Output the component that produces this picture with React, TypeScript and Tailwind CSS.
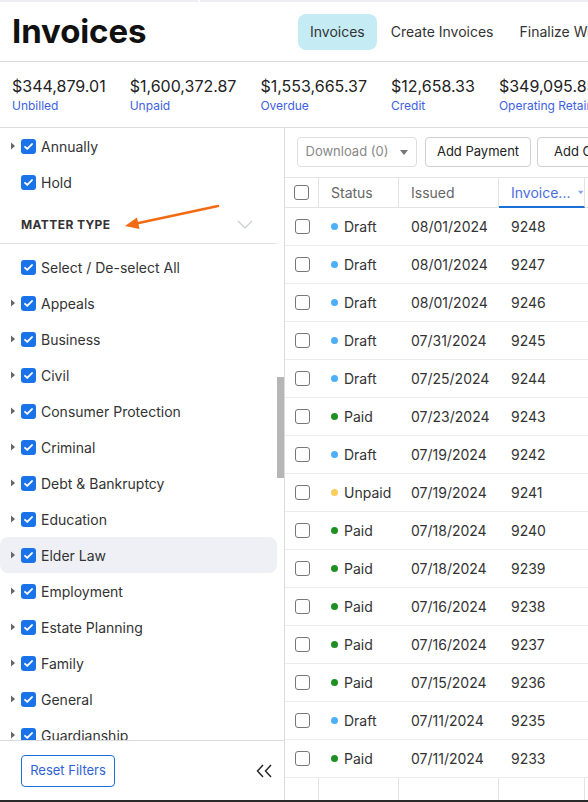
import React from "react";

type Row = { status: "Draft" | "Paid" | "Unpaid"; issued: string; num: string };

const rows: Row[] = [
  { status: "Draft", issued: "08/01/2024", num: "9248" },
  { status: "Draft", issued: "08/01/2024", num: "9247" },
  { status: "Draft", issued: "08/01/2024", num: "9246" },
  { status: "Draft", issued: "07/31/2024", num: "9245" },
  { status: "Draft", issued: "07/25/2024", num: "9244" },
  { status: "Paid", issued: "07/23/2024", num: "9243" },
  { status: "Draft", issued: "07/19/2024", num: "9242" },
  { status: "Unpaid", issued: "07/19/2024", num: "9241" },
  { status: "Paid", issued: "07/18/2024", num: "9240" },
  { status: "Paid", issued: "07/18/2024", num: "9239" },
  { status: "Paid", issued: "07/16/2024", num: "9238" },
  { status: "Paid", issued: "07/16/2024", num: "9237" },
  { status: "Paid", issued: "07/15/2024", num: "9236" },
  { status: "Draft", issued: "07/11/2024", num: "9235" },
  { status: "Paid", issued: "07/11/2024", num: "9233" },
];

const stats = [
  { amount: "$344,879.01", label: "Unbilled" },
  { amount: "$1,600,372.87", label: "Unpaid" },
  { amount: "$1,553,665.37", label: "Overdue" },
  { amount: "$12,658.33", label: "Credit" },
  { amount: "$349,095.85", label: "Operating Retainer" },
];

const matterTypes = [
  "Appeals",
  "Business",
  "Civil",
  "Consumer Protection",
  "Criminal",
  "Debt & Bankruptcy",
  "Education",
  "Elder Law",
  "Employment",
  "Estate Planning",
  "Family",
  "General",
  "Guardianship",
];

function Check() {
  return (
    <span className="flex h-[15px] w-[15px] shrink-0 items-center justify-center rounded-[3px] bg-[#1a73e8]">
      <svg width="11" height="11" viewBox="0 0 12 12" fill="none">
        <path d="M2.2 6.3l2.4 2.4 5.2-5.4" stroke="white" strokeWidth="2" strokeLinecap="round" strokeLinejoin="round" />
      </svg>
    </span>
  );
}

function Caret() {
  return (
    <svg width="6" height="8" viewBox="0 0 6 8" className="shrink-0">
      <path d="M1 0.5L5 4L1 7.5Z" fill="#666" />
    </svg>
  );
}

function FilterRow({ label, caret = true, active = false }: { label: string; caret?: boolean; active?: boolean }) {
  return (
    <div className={`flex h-9 items-center gap-[5px] rounded-lg pl-[9px] ${active ? "bg-[#eef0f5]" : ""}`}>
      <span className="flex w-[7px] justify-center">{caret && <Caret />}</span>
      <Check />
      <span className="text-[14px] text-[#333]">{label}</span>
    </div>
  );
}

const dot: Record<Row["status"], string> = {
  Draft: "bg-[#4db0f5]",
  Paid: "bg-[#1f8f24]",
  Unpaid: "bg-[#fbcd5e]",
};

function Box() {
  return <span className="block h-[15px] w-[15px] rounded-[3px] border border-[#777] bg-white" />;
}

export default function App() {
  return (
    <div className="h-[802px] w-[588px] overflow-hidden bg-white font-['Inter','Liberation_Sans',sans-serif] text-[#222]">
      <div className="flex h-[2px]">
        <div className="w-[198px] bg-[#eceef3]" />
        <div className="ml-[2px] flex-1 bg-[#eceef3]" />
      </div>

      <header className="flex h-[60px] items-center overflow-hidden border-b border-[#dcdcdc] pl-3">
        <h1 className="w-[286px] shrink-0 text-[33px] font-bold leading-none tracking-[-0.1px] text-[#111]">Invoices</h1>
        <nav className="flex shrink-0 items-center gap-[2px] whitespace-nowrap text-[14px] text-[#333]">
          <span className="flex h-9 items-center rounded-lg bg-[#c5ecf4] px-3">Invoices</span>
          <span className="flex h-9 items-center px-3">Create Invoices</span>
          <span className="flex h-9 items-center px-3">Finalize Write-offs</span>
        </nav>
      </header>

      <section className="flex h-[66px] items-center gap-6 overflow-hidden whitespace-nowrap border-b border-[#dcdcdc] px-3">
        {stats.map((s) => (
          <div key={s.label} className="flex shrink-0 flex-col pt-[2px]">
            <span className="text-[16px] leading-5 text-[#222]">{s.amount}</span>
            <span className="text-[12px] leading-5 text-[#3d5fe0]">{s.label}</span>
          </div>
        ))}
      </section>

      <div className="flex h-[672px]">
        <aside className="flex w-[285px] shrink-0 flex-col border-r border-[#dcdcdc]">
          <div className="relative flex-1 overflow-hidden">
            <div className="w-[277px]">
              <FilterRow label="Annually" />
              <FilterRow label="Hold" caret={false} />
              <div className="relative flex h-[44px] items-center justify-between border-b border-[#e3e3e3] pl-[21px] pr-6 pt-[6px]">
                <span className="text-[12px] font-bold tracking-[0.4px] text-[#333]">MATTER TYPE</span>
                <svg width="16" height="9" viewBox="0 0 16 9" fill="none">
                  <path d="M1 1l7 7 7-7" stroke="#c8ccd6" strokeWidth="1.2" />
                </svg>
                <svg className="absolute left-[120px] top-[2px]" width="104" height="28" viewBox="0 0 104 28" fill="none">
                  <path d="M98 4L14 22" stroke="#f26a14" strokeWidth="2.5" strokeLinecap="round" />
                  <path d="M5 24L17 15.5L19.5 27Z" fill="#f26a14" />
                </svg>
              </div>
              <div className="h-[5px]" />
              <FilterRow label="Select / De-select All" caret={false} />
              {matterTypes.map((m) => (
                <FilterRow key={m} label={m} active={m === "Elder Law"} />
              ))}
            </div>
            <div className="absolute left-[277px] top-[249px] h-[101px] w-[7px] bg-[#b6b6b6]" />
          </div>
          <div className="flex h-[60px] items-center justify-between border-t border-[#dcdcdc] pl-[21px] pr-[12px]">
            <button className="h-8 w-[94px] rounded-[4px] border border-[#1a6fd6] text-[13px] text-[#2f62d6]">Reset Filters</button>
            <svg width="16" height="14" viewBox="0 0 16 14" fill="none">
              <path d="M7 1L1.5 7L7 13M15 1L9.5 7L15 13" stroke="#222" strokeWidth="1.4" />
            </svg>
          </div>
        </aside>

        <main className="flex min-w-0 flex-1 flex-col overflow-hidden">
          <div className="flex h-[49px] shrink-0 items-start whitespace-nowrap pl-3 pt-[9px] text-[13px]">
            <button className="flex h-[30px] w-[120px] shrink-0 items-center justify-center gap-3 rounded-[4px] border border-[#dedede] text-[#888]">
              Download (0)
              <svg width="8" height="5" viewBox="0 0 8 5"><path d="M0 0h8L4 5z" fill="#777" /></svg>
            </button>
            <button className="ml-2 h-[30px] w-[106px] shrink-0 rounded-[4px] border border-[#cfcfcf] text-[#222]">Add Payment</button>
            <button className="ml-[6px] h-[30px] shrink-0 rounded-[4px] border border-[#cfcfcf] px-4 text-[#222]">Add Credit</button>
          </div>

          <div className="grid grid-cols-[34px_80px_100px_86px_40px] border-t border-[#e3e3e3] text-[14px]">
            <div className="flex h-[30px] items-center justify-center border-b border-r border-[#e3e3e3]">
              <Box />
            </div>
            <div className="flex h-[30px] items-center border-b border-r border-[#e3e3e3] pl-3 text-[#666]">Status</div>
            <div className="flex h-[30px] items-center border-b border-r border-[#e3e3e3] pl-3 text-[#666]">Issued</div>
            <div className="flex h-[30px] items-center gap-2 whitespace-nowrap border-b-2 border-r border-b-[#1a6fd6] border-r-[#e3e3e3] pl-3 text-[#4a6ee0]">
              Invoice...
              <svg width="8" height="5" viewBox="0 0 8 5"><path d="M0 0h8L4 5z" fill="#8aa6ee" /></svg>
            </div>
            <div className="h-[30px] border-b border-[#e3e3e3]" />

            {rows.map((r) => (
              <React.Fragment key={r.num}>
                <div className="flex h-[38px] items-center justify-center border-b border-[#ececec]">
                  <Box />
                </div>
                <div className="flex h-[38px] items-center gap-[6px] border-b border-[#ececec] pl-3 text-[#333]">
                  <span className={`h-[7px] w-[7px] rounded-full ${dot[r.status]}`} />
                  {r.status}
                </div>
                <div className="flex h-[38px] items-center border-b border-[#ececec] pl-3 text-[#333]">{r.issued}</div>
                <div className="flex h-[38px] items-center border-b border-[#ececec] pl-3 text-[#333]">{r.num}</div>
                <div className="h-[38px] border-b border-[#ececec]" />
              </React.Fragment>
            ))}

            <div className="h-[24px] border-r border-[#e3e3e3]" />
            <div className="h-[24px] border-r border-[#e3e3e3]" />
            <div className="h-[24px] border-r border-[#e3e3e3]" />
            <div className="h-[24px] border-r border-[#e3e3e3]" />
            <div className="h-[24px]" />
          </div>
        </main>
      </div>
      <div className="h-[2px] bg-[#2a2a2a]" />
    </div>
  );
}
